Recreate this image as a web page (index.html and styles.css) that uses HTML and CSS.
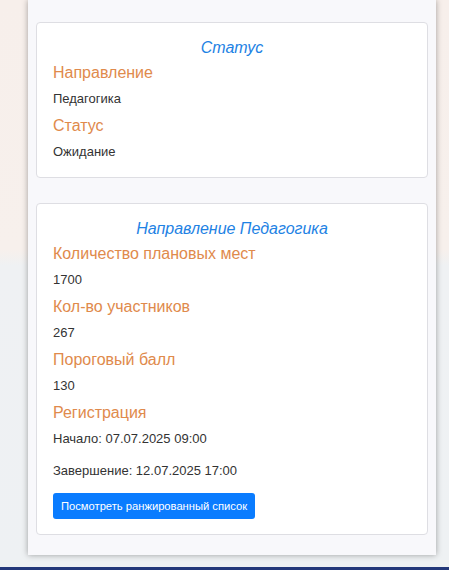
FILE: index.html
```html
<!DOCTYPE html>
<html lang="ru">
<head>
<meta charset="utf-8">
<title>Статус</title>
<link rel="stylesheet" href="styles.css">
</head>
<body>
<div class="page">
  <main class="panel">
    <section class="card">
      <h4 class="card-title">Статус</h4>
      <h5 class="label">Направление</h5>
      <p class="value">Педагогика</p>
      <h5 class="label">Статус</h5>
      <p class="value">Ожидание</p>
    </section>
    <section class="card">
      <h4 class="card-title">Направление Педагогика</h4>
      <h5 class="label">Количество плановых мест</h5>
      <p class="value">1700</p>
      <h5 class="label">Кол-во участников</h5>
      <p class="value">267</p>
      <h5 class="label">Пороговый балл</h5>
      <p class="value">130</p>
      <h5 class="label">Регистрация</h5>
      <p class="value date">Начало: 07.07.2025 09:00</p>
      <p class="value date">Завершение: 12.07.2025 17:00</p>
      <button class="btn" type="button">Посмотреть ранжированный список</button>
    </section>
  </main>
  <footer class="footer"></footer>
</div>
</body>
</html>
```
FILE: styles.css
```css
html, body {
  margin: 0;
  padding: 0;
}
body {
  font-family: "Liberation Sans", Arial, sans-serif;
  color: #333;
  background: #eff1f3;
}
.page {
  min-height: 570px;
  display: flex;
  flex-direction: column;
  background: linear-gradient(to bottom, #f7efeb 0, #f7f0ec 250px, #eff1f3 266px, #eef1f3 100%);
  overflow: hidden;
}
.panel {
  margin-left: 28px;
  width: 408px;
  box-sizing: border-box;
  padding: 22px 8px 20px;
  background: #f8f8fb;
  box-shadow: 0 0 6px rgba(0, 0, 0, 0.35);
  display: flex;
  flex-direction: column;
  gap: 25px;
}
.card {
  background: #fff;
  border: 1px solid #dedee3;
  border-radius: 4px;
  padding: 16px 16px 15px;
  display: flex;
  flex-direction: column;
  align-items: flex-start;
}
.card-title {
  align-self: stretch;
  margin: 0 0 6px;
  text-align: center;
  font-size: 16px;
  font-style: italic;
  font-weight: normal;
  line-height: 18px;
  color: #1e82e4;
}
.label {
  margin: 0 0 6px;
  font-size: 16px;
  font-weight: normal;
  line-height: 20px;
  color: #e08a4c;
}
.value {
  margin: 0 0 7px;
  font-size: 13px;
  line-height: 20px;
  color: #333;
}
.card > .value:last-child {
  margin-bottom: 0;
}
.date {
  margin-bottom: 12px;
}
.btn {
  margin-top: 0;
  height: 26px;
  padding: 0 8px;
  border: none;
  border-radius: 3px;
  background: #0a7cff;
  color: #fff;
  font-family: "Liberation Sans", Arial, sans-serif;
  font-size: 11.2px;
  line-height: 26px;
}
.footer {
  margin-top: 12px;
  height: 6px;
  background: #23387a;
}
```
